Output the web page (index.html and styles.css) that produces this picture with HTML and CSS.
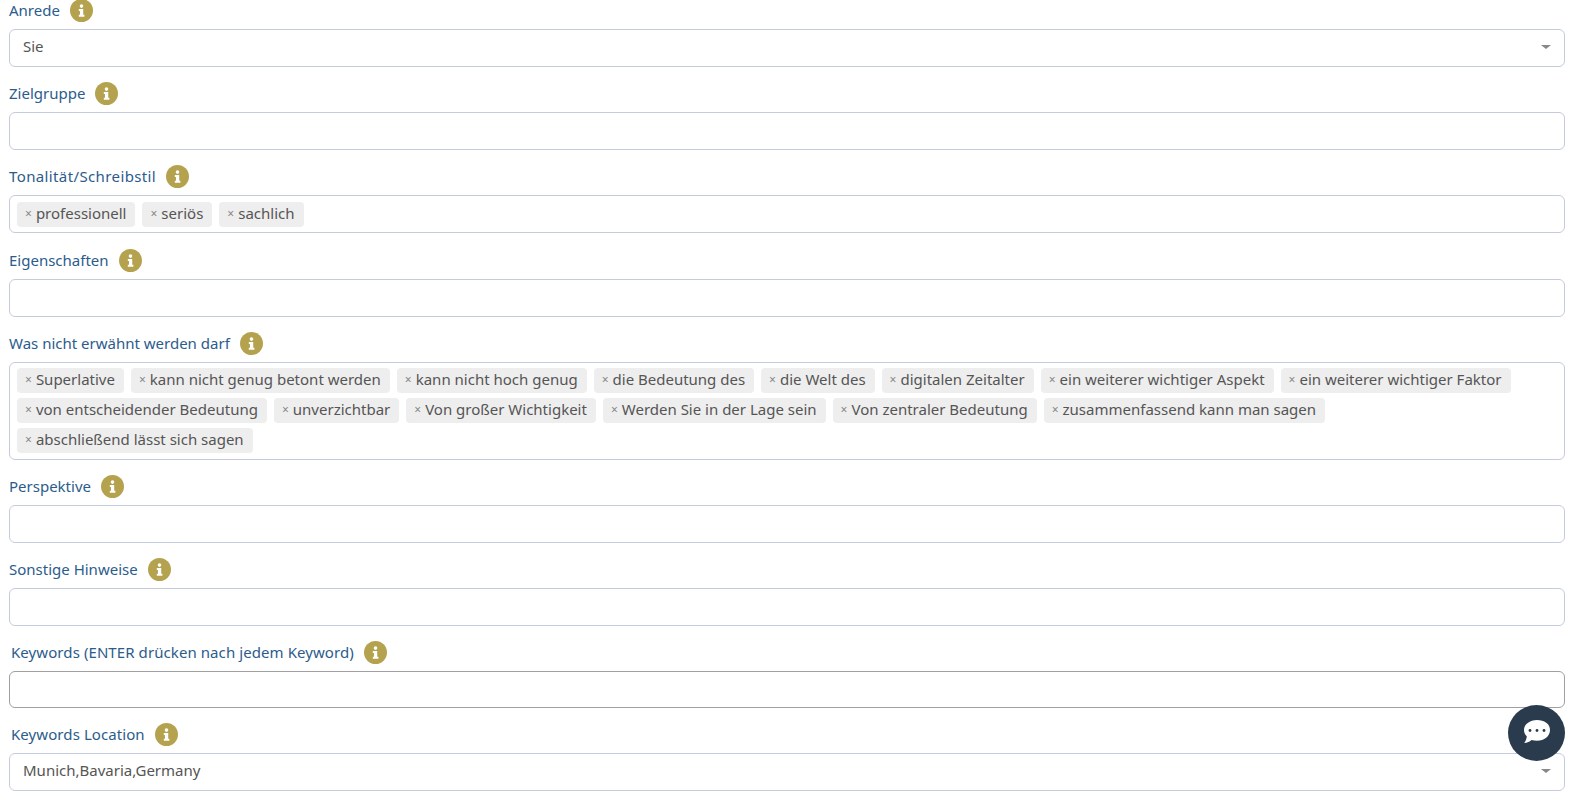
FILE: index.html
```html
<!DOCTYPE html>
<html lang="de">
<head>
<meta charset="utf-8">
<title>Formular</title>
<link rel="stylesheet" href="styles.css">
</head>
<body>
<svg class="defs" width="0" height="0" aria-hidden="true">
  <symbol id="info" viewBox="0 0 24 24">
    <circle cx="12" cy="12" r="12" fill="#b5a24f"/>
    <circle cx="12" cy="7.400" r="1.900" fill="#fff"/>
    <path d="M9.200 10.500h4.600v6h1.200v2H9.200v-2h1.200v-4H9.200z" fill="#fff"/>
  </symbol>
</svg>
<form class="form">
  <div class="field">
    <div class="label"><span>Anrede</span><svg class="info"><use href="#info"/></svg></div>
    <div class="box select">Sie<span class="arrow"></span></div>
  </div>
  <div class="field">
    <div class="label"><span>Zielgruppe</span><svg class="info"><use href="#info"/></svg></div>
    <div class="box"></div>
  </div>
  <div class="field">
    <div class="label wide"><span>Tonalität/Schreibstil</span><svg class="info"><use href="#info"/></svg></div>
    <div class="box tags">
      <span class="tag"><i>×</i>professionell</span>
      <span class="tag"><i>×</i>seriös</span>
      <span class="tag"><i>×</i>sachlich</span>
    </div>
  </div>
  <div class="field">
    <div class="label"><span>Eigenschaften</span><svg class="info"><use href="#info"/></svg></div>
    <div class="box"></div>
  </div>
  <div class="field">
    <div class="label"><span>Was nicht erwähnt werden darf</span><svg class="info"><use href="#info"/></svg></div>
    <div class="box tags">
      <span class="tag"><i>×</i>Superlative</span>
      <span class="tag"><i>×</i>kann nicht genug betont werden</span>
      <span class="tag"><i>×</i>kann nicht hoch genug</span>
      <span class="tag"><i>×</i>die Bedeutung des</span>
      <span class="tag"><i>×</i>die Welt des</span>
      <span class="tag"><i>×</i>digitalen Zeitalter</span>
      <span class="tag"><i>×</i>ein weiterer wichtiger Aspekt</span>
      <span class="tag"><i>×</i>ein weiterer wichtiger Faktor</span>
      <span class="tag"><i>×</i>von entscheidender Bedeutung</span>
      <span class="tag"><i>×</i>unverzichtbar</span>
      <span class="tag"><i>×</i>Von großer Wichtigkeit</span>
      <span class="tag"><i>×</i>Werden Sie in der Lage sein</span>
      <span class="tag"><i>×</i>Von zentraler Bedeutung</span>
      <span class="tag"><i>×</i>zusammenfassend kann man sagen</span>
      <span class="tag"><i>×</i>abschließend lässt sich sagen</span>
    </div>
  </div>
  <div class="field">
    <div class="label"><span>Perspektive</span><svg class="info"><use href="#info"/></svg></div>
    <div class="box"></div>
  </div>
  <div class="field">
    <div class="label"><span>Sonstige Hinweise</span><svg class="info"><use href="#info"/></svg></div>
    <div class="box"></div>
  </div>
  <div class="field">
    <div class="label inset"><span>Keywords (ENTER drücken nach jedem Keyword)</span><svg class="info"><use href="#info"/></svg></div>
    <div class="box focused"></div>
  </div>
  <div class="field">
    <div class="label inset"><span>Keywords Location</span><svg class="info"><use href="#info"/></svg></div>
    <div class="box select">Munich,Bavaria,Germany<span class="arrow"></span></div>
  </div>
</form>
<button class="chat" type="button" aria-label="Chat">
  <svg viewBox="0 0 26 23" width="26" height="23">
    <path d="M13 0C5.800 0 0 4.400 0 10c0 2.500 1 4.600 2.800 6.300-.2 2.500-1 4.800-2.600 6.700 3-.3 5.500-1.300 7.300-3 1.700.5 3.500.8 5.500.8 7.200 0 13-4.500 13-10.800S20.200 0 13 0z" fill="#fff"/>
    <circle cx="6" cy="10.500" r="1.400" fill="#2a3b4d"/>
    <circle cx="13" cy="10.500" r="1.400" fill="#2a3b4d"/>
    <circle cx="20" cy="10.500" r="1.400" fill="#2a3b4d"/>
  </svg>
</button>
</body>
</html>
```
FILE: styles.css
```css
* { box-sizing: border-box; }
html, body { margin: 0; background: #fff; }
body {
  font-family: "Noto Sans", "Open Sans", sans-serif;
  font-size: 15px;
  color: #555;
  height: 801px;
  overflow: hidden;
}
.defs { position: absolute; }
.form {
  display: flex;
  flex-direction: column;
  margin-top: -1px;
  padding: 0 15px 0 9px;
}
.field { margin-bottom: 15.2px; }
.label {
  display: flex;
  align-items: center;
  gap: 10px;
  height: 23px;
  margin-bottom: 7px;
  color: #2b5c8c;
  white-space: nowrap;
}
.label span { margin-bottom: 1px; }
.label.wide { letter-spacing: .38px; }
.label.inset { padding-left: 2px; letter-spacing: .08px; }
.info { width: 23px; height: 23px; flex: none; }
.box {
  position: relative;
  min-height: 38px;
  border: 1px solid #c3cbdc;
  border-radius: 6px;
  background: #fff;
  padding: 0 13px;
  line-height: 33px;
}
.box.focused { border-color: #a0a0a0; min-height: 36.5px; }
.tags {
  display: flex;
  flex-wrap: wrap;
  column-gap: 7px;
  row-gap: 5px;
  padding: 5.5px 50px 5.5px 7px;
  line-height: 25px;
}
.tag {
  display: inline-flex;
  align-items: center;
  height: 25px;
  padding: 0 9px 2px 8px;
  border-radius: 4px;
  background: #eee;
  white-space: nowrap;
}
.tag i {
  font-style: normal;
  font-size: 12px;
  color: #888;
  margin-right: 4px;
}
.arrow {
  position: absolute;
  right: 13px;
  top: 15px;
  border-style: solid;
  border-width: 4px 5px 0;
  border-color: #888 transparent transparent;
}
.chat {
  position: fixed;
  left: 1508px;
  top: 705px;
  width: 57px;
  height: 56px;
  border: 0;
  border-radius: 50%;
  background: #2a3b4d;
  display: flex;
  align-items: center;
  justify-content: center;
  padding: 0 0 3px;
}
```
